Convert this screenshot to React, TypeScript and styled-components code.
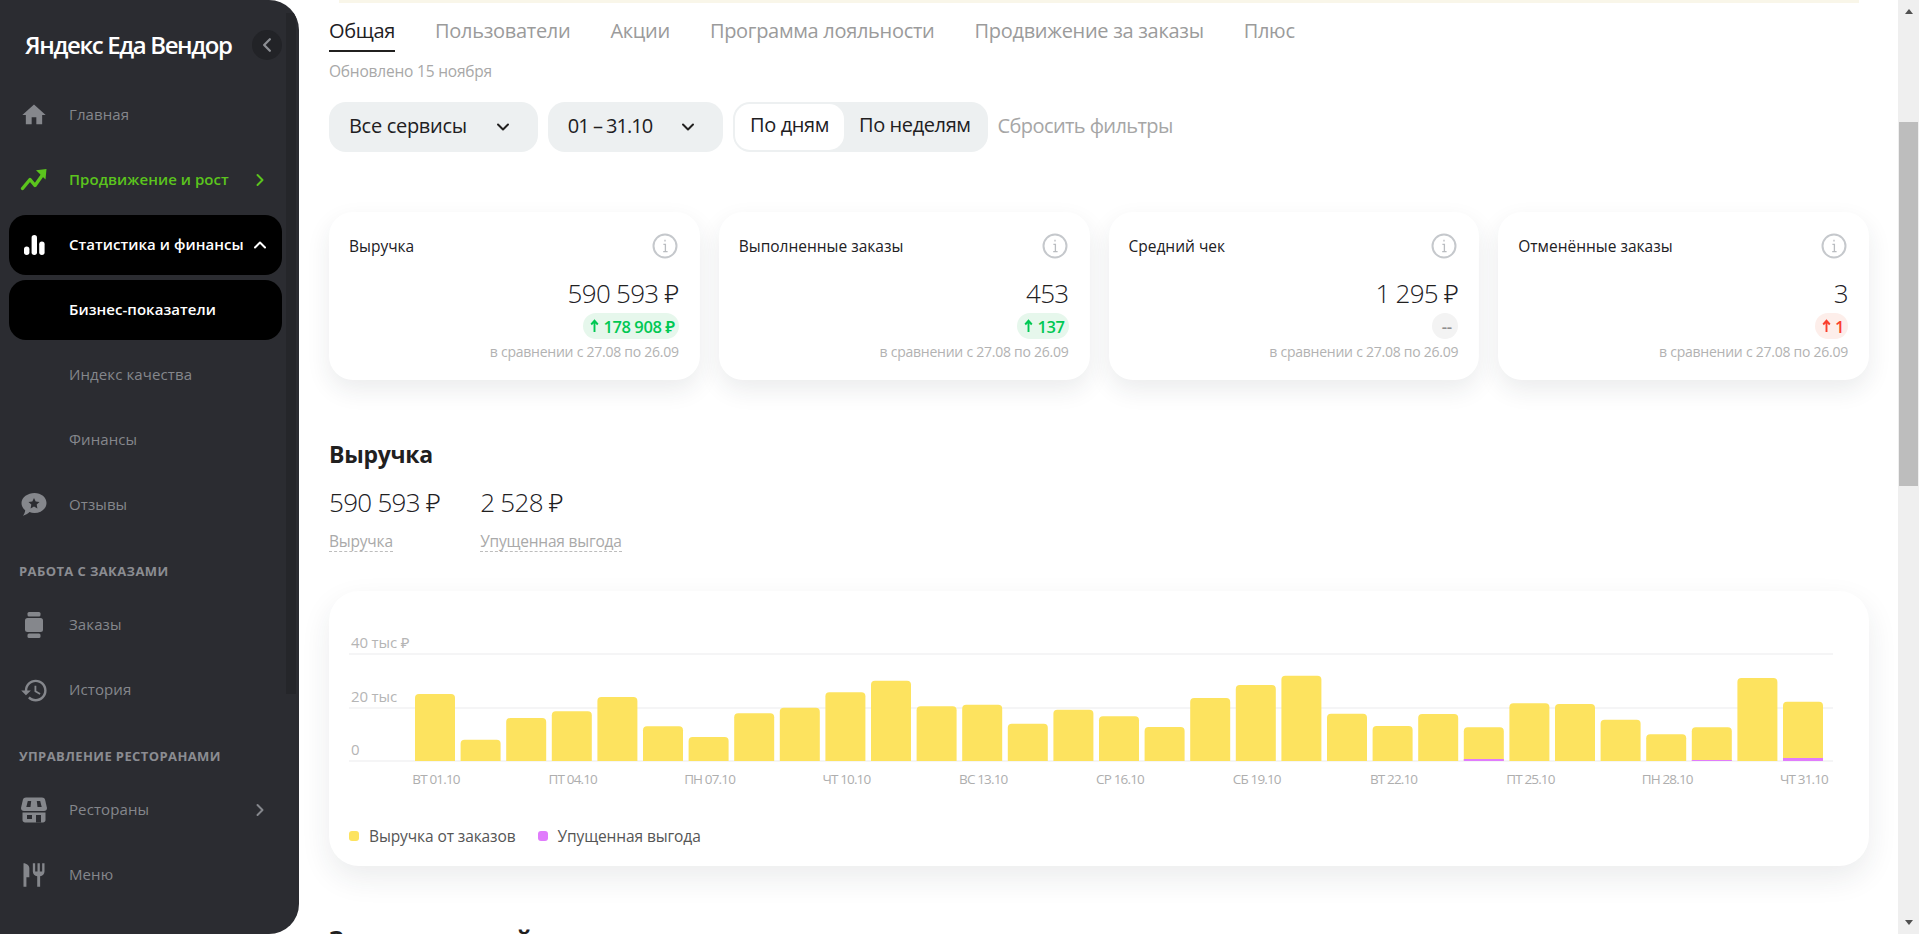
import React from "react";
import styled, { createGlobalStyle } from "styled-components";
import { MdHome, MdHistory, MdRestaurant } from "react-icons/md";

const Global = createGlobalStyle`
  html, body { margin: 0; padding: 0; height: 100%; background: #fff; overflow: hidden; }
  #root { height: 100%; }
  * { box-sizing: border-box; }
`;

const FONT = `"Open Sans", "Noto Sans", sans-serif`;

const Page = styled.div`
  display: flex;
  width: 1919px;
  height: 934px;
  overflow: hidden;
  background: #fff;
  font-family: ${FONT};
`;

const Sidebar = styled.aside`
  position: relative;
  flex: 0 0 299px;
  height: 934px;
  background: #2b2c31;
  border-radius: 0 30px 30px 0;
  padding: 0 17px 0 9px;
  overflow: hidden;
`;

const SideScroll = styled.div`
  position: absolute;
  right: 3px;
  top: 13px;
  width: 10px;
  height: 681px;
  background: #25262a;
`;

const LogoRow = styled.div`
  display: flex;
  align-items: center;
  justify-content: space-between;
  height: 85px;
  padding: 5px 0 0 16px;
`;

const Logo = styled.div`
  color: #fff;
  font-size: 24px;
  font-weight: 600;
  letter-spacing: -1.35px;
  white-space: nowrap;
  padding-bottom: 2px;
`;

const Collapse = styled.div`
  width: 30px;
  height: 30px;
  border-radius: 50%;
  background: #222327;
  color: #8d8f94;
  display: flex;
  align-items: center;
  justify-content: center;
`;

const Nav = styled.nav`
  display: flex;
  flex-direction: column;
  gap: 5px;
`;

const Item = styled.div<{ $tone?: "green" | "active" | "plain" }>`
  display: flex;
  align-items: center;
  height: 60px;
  border-radius: 17px;
  padding: 0 15px 0 0;
  font-size: 15px;
  font-weight: ${(p) => (p.$tone === "active" || p.$tone === "green" ? 600 : 500)};
  letter-spacing: ${(p) => (p.$tone === "active" || p.$tone === "green" ? "0.05px" : "0.1px")};
  white-space: nowrap;
  background: ${(p) => (p.$tone === "active" ? "#000" : "transparent")};
  color: ${(p) => (p.$tone === "active" ? "#fff" : p.$tone === "green" ? "#5bc41d" : "#85878c")};
`;

const IconSlot = styled.span`
  flex: 0 0 60px;
  display: flex;
  align-items: center;
  justify-content: center;
  padding-right: 10px;
  svg { display: block; }
`;

const ItemLabel = styled.span`
  flex: 1;
  padding-bottom: 2px;
`;

const NavHeader = styled.div`
  height: 50px;
  padding: 22px 0 0 10px;
  font-size: 13px;
  line-height: 18px;
  font-weight: 700;
  letter-spacing: 0.4px;
  color: #8b8d92;
  text-transform: uppercase;
  white-space: nowrap;
`;

const FlippedFork = styled(MdRestaurant)`
  transform: scaleX(-1);
`;

const Main = styled.main`
  flex: 1;
  min-width: 0;
  height: 934px;
  overflow: hidden;
  padding: 0 29px 0 30px;
`;

const TopStrip = styled.div`
  height: 3px;
  margin: 0 10px;
  background: #f9f6e9;
`;

const Tabs = styled.div`
  display: flex;
  gap: 40px;
  height: 49px;
`;

const Tab = styled.div<{ $active?: boolean }>`
  height: 49px;
  padding-top: 12px;
  font-size: 20px;
  line-height: 32px;
  letter-spacing: -0.3px;
  white-space: nowrap;
  color: ${(p) => (p.$active ? "#21201f" : "#9b9b9b")};
  border-bottom: 2px solid ${(p) => (p.$active ? "#21201f" : "transparent")};
`;

const Updated = styled.div`
  margin-top: 9px;
  font-size: 15.5px;
  line-height: 20px;
  letter-spacing: -0.2px;
  color: #a8a8a8;
`;

const Filters = styled.div`
  display: flex;
  align-items: center;
  gap: 10px;
  margin-top: 21px;
  height: 50px;
`;

const Select = styled.div<{ $tight?: boolean }>`
  display: flex;
  align-items: center;
  gap: 29px;
  height: 50px;
  padding: 0 28px 3px 20px;
  border-radius: 17px;
  background: #edf0f1;
  color: #21201f;
  font-size: 20px;
  letter-spacing: ${(p) => (p.$tight ? "-1px" : "-0.3px")};
  white-space: nowrap;
  svg { margin-top: 3px; }
`;

const Toggle = styled.div`
  display: flex;
  align-items: center;
  height: 50px;
  padding: 2px;
  border-radius: 17px;
  background: #edf0f1;
`;

const ToggleItem = styled.div<{ $active?: boolean }>`
  height: 46px;
  line-height: 42px;
  padding: 0 15px;
  border-radius: 15px;
  font-size: 20px;
  letter-spacing: -0.4px;
  white-space: nowrap;
  color: #21201f;
  background: ${(p) => (p.$active ? "#fff" : "transparent")};
`;

const Reset = styled.div`
  font-size: 20px;
  letter-spacing: -0.6px;
  color: #a6a6a6;
  white-space: nowrap;
  padding-bottom: 4px;
`;

const Cards = styled.div`
  display: grid;
  grid-template-columns: repeat(4, 1fr);
  gap: 19px;
  margin-top: 60px;
`;

const shadow = `0 10px 24px rgba(30, 40, 60, 0.09)`;

const Card = styled.div`
  height: 168px;
  padding: 22px 21px 0 20px;
  border-radius: 24px;
  background: #fff;
  box-shadow: ${shadow};
  display: flex;
  flex-direction: column;
  align-items: flex-end;
`;

const CardHead = styled.div`
  align-self: stretch;
  display: flex;
  align-items: center;
  justify-content: space-between;
  height: 24px;
  padding-right: 1px;
`;

const CardLabel = styled.div`
  font-size: 15.5px;
  letter-spacing: 0;
  color: #21201f;
`;

const CardValue = styled.div`
  margin-top: 20px;
  font-size: 26px;
  line-height: 30px;
  font-weight: 300;
  letter-spacing: -0.7px;
  color: #21201f;
  white-space: nowrap;
`;

const tones = {
  green: ["#e6f7ec", "#00c853"],
  gray: ["#f3f3f3", "#8f8f8f"],
  red: ["#fdeeea", "#fa3e2c"],
};

const Badge = styled.div<{ $tone: keyof typeof tones }>`
  display: flex;
  align-items: center;
  justify-content: center;
  gap: 4px;
  margin-top: 5px;
  height: 26px;
  min-width: 26px;
  padding: 0 4px 0 7px;
  border-radius: 13px;
  font-size: 16.5px;
  font-weight: 600;
  letter-spacing: -0.4px;
  white-space: nowrap;
  background: ${(p) => tones[p.$tone][0]};
  color: ${(p) => tones[p.$tone][1]};
`;

const Compare = styled.div`
  margin-top: 3px;
  font-size: 14px;
  line-height: 20px;
  letter-spacing: -0.25px;
  color: #b2b2b2;
  white-space: nowrap;
`;

const SectionTitle = styled.h2`
  margin: 59px 0 0;
  font-size: 23px;
  line-height: 30px;
  font-weight: 700;
  letter-spacing: -0.3px;
  color: #21201f;
`;

const Totals = styled.div`
  display: flex;
  gap: 40px;
  margin-top: 18px;
`;

const TotalCol = styled.div`
  display: flex;
  flex-direction: column;
  align-items: flex-start;
`;

const TotalValue = styled.div`
  font-size: 26px;
  line-height: 30px;
  font-weight: 300;
  letter-spacing: -0.7px;
  color: #21201f;
  white-space: nowrap;
`;

const TotalLabel = styled.div`
  margin-top: 14px;
  height: 21px;
  font-size: 15.5px;
  line-height: 20px;
  letter-spacing: -0.2px;
  color: #a9a9a9;
  border-bottom: 1px dashed #bdbdbd;
  white-space: nowrap;
`;

const ChartCard = styled.section`
  height: 275px;
  margin-top: 39px;
  padding: 44px 20px 0;
  border-radius: 30px;
  background: #fff;
  box-shadow: 0 12px 30px rgba(30, 40, 60, 0.09);
`;

const ChartSvg = styled.svg`
  display: block;
  width: 1484px;
  height: 160px;
  font-family: ${FONT};
`;

const AxisY = styled.text`
  font-size: 15px;
  letter-spacing: -0.15px;
  fill: #b5b5b5;
`;

const AxisX = styled.text`
  font-size: 13.5px;
  letter-spacing: -0.85px;
  fill: #aeaeae;
  text-anchor: middle;
`;

const Legend = styled.div`
  display: flex;
  align-items: center;
  gap: 22px;
  height: 20px;
  margin-top: 31px;
`;

const LegendItem = styled.div`
  display: flex;
  align-items: center;
  gap: 10px;
  font-size: 15.5px;
  letter-spacing: -0.1px;
  color: #555;
  white-space: nowrap;
`;

const Dot = styled.span<{ $color: string }>`
  width: 10px;
  height: 10px;
  border-radius: 3px;
  background: ${(p) => p.$color};
`;

const NextTitle = styled(SectionTitle)`
  margin-top: 58px;
`;

const Scrollbar = styled.div`
  flex: 0 0 21px;
  height: 934px;
  background: #efefef;
  display: flex;
  flex-direction: column;
  align-items: center;
`;

const ScrollUp = styled.div`
  margin-top: 9px;
  width: 0;
  height: 0;
  border-left: 4.5px solid transparent;
  border-right: 4.5px solid transparent;
  border-bottom: 5px solid #505050;
`;

const ScrollThumb = styled.div`
  width: 19px;
  height: 364px;
  margin-top: 108px;
  background: #bdbdbd;
`;

const ScrollDown = styled.div`
  margin-top: auto;
  margin-bottom: 9px;
  width: 0;
  height: 0;
  border-left: 4.5px solid transparent;
  border-right: 4.5px solid transparent;
  border-top: 5px solid #505050;
`;

const Chevron = ({ dir, size = 14, color = "currentColor", w = 2 }: { dir: "l" | "r" | "u" | "d"; size?: number; color?: string; w?: number }) => {
  const d = { l: "M9.5 2 4.5 7l5 5", r: "M4.5 2l5 5-5 5", u: "M2 9.5l5-5 5 5", d: "M2 4.5l5 5 5-5" }[dir];
  return (
    <svg width={size} height={size} viewBox="0 0 14 14" fill="none">
      <path d={d} stroke={color} strokeWidth={w} strokeLinecap="round" strokeLinejoin="round" />
    </svg>
  );
};

const TrendIcon = () => (
  <svg width="28" height="24" viewBox="0 0 28 24" fill="none">
    <path d="M2.500 20.500 10 11.500l5 6 8.500-12" stroke="#5bc41d" strokeWidth="3.400" strokeLinejoin="round" strokeLinecap="round" />
    <path d="M16 2.200 26.500 1l-1 10.500z" fill="#5bc41d" />
  </svg>
);

const BarsIcon = () => (
  <svg width="21" height="20" viewBox="0 0 21 20" fill="#fff">
    <rect x="0" y="11.500" width="5.400" height="8.500" rx="2.700" />
    <rect x="7.600" y="0" width="5.400" height="20" rx="2.700" />
    <rect x="15.200" y="6.500" width="5.400" height="13.500" rx="2.700" />
  </svg>
);

const ReviewIcon = () => (
  <svg width="28" height="28" viewBox="0 0 28 28" fill="#85878c">
    <path d="M14.500 2C21 2 26.500 6.300 26.500 12S21 22 14.500 22c-1.800 0-3.500-.3-5-.9-1.700 1.700-4 3-6.500 3.700 1.200-1.500 2-3.400 2.200-5.500C2.800 17.300 1.500 14.800 1.500 12 1.500 6.300 8 2 14.500 2z" />
    <path fill="#2b2c31" d="m14 7 1.700 3.500 3.800.5-2.800 2.600.7 3.800-3.400-1.800-3.400 1.800.7-3.800L8.500 11l3.800-.5z" />
  </svg>
);

const WatchIcon = () => (
  <svg width="24" height="28" viewBox="0 0 24 28" fill="#85878c">
    <rect x="5.500" y="1" width="13" height="4.500" rx="1.500" />
    <rect x="3" y="7" width="18" height="14" rx="2.500" />
    <rect x="5.500" y="22.500" width="13" height="4.500" rx="1.500" />
  </svg>
);

const StoreIcon = () => (
  <svg width="26" height="26" viewBox="0 0 26 26" fill="#85878c">
    <path d="M5 .5h16c1.500 0 2.700.9 3.100 2.300L26 11c0 2-1.200 3-3 3H3c-1.800 0-3-1-3-3l1.900-8.200C2.300 1.400 3.500.5 5 .5z" />
    <path fill="#2b2c31" d="M6.800 4h3.400l-.7 6H5.300zM15.800 4h3.400l1.500 6h-4.200z" />
    <path d="M1.500 15.500h23V23c0 1.600-1.200 2.500-2.500 2.500H4c-1.300 0-2.500-.9-2.500-2.500z" />
    <path fill="#2b2c31" d="M6 18h5v4H6zM15 18h5v7.500h-5z" />
  </svg>
);

const InfoIcon = () => (
  <svg width="26" height="26" viewBox="0 0 26 26" fill="none">
    <circle cx="13" cy="13" r="11.500" stroke="#c5c8cc" strokeWidth="2" />
    <path d="M13 6.800v1.800M11.400 11.400H13.400V18.400M11.200 18.600h4.400" stroke="#b9bcc0" strokeWidth="1.300" />
  </svg>
);

const UpArrow = () => (
  <svg width="9" height="14" viewBox="0 0 9 14" fill="none">
    <path d="M4.500 13V3M1.200 5.500 4.500 1.800l3.300 3.700" stroke="currentColor" strokeWidth="1.900" />
  </svg>
);

const tops = [162, 299, 234, 214, 171, 259, 291, 220, 203, 157, 122, 199, 194, 251, 209, 229, 261, 174, 135, 107, 221, 258, 222, 262, 190, 192, 239, 283, 262, 114, 185];
const purple: Record<number, number> = { 23: 2, 28: 1, 30: 3 };
const xLabels = ["ВТ 01.10", "ПТ 04.10", "ПН 07.10", "ЧТ 10.10", "ВС 13.10", "СР 16.10", "СБ 19.10", "ВТ 22.10", "ПТ 25.10", "ПН 28.10", "ЧТ 31.10"];
const BASE = 126;
const gridYs = [19, 73, 126];

const Chart = () => (
  <ChartSvg viewBox="0 0 1484 160">
    {gridYs.map((y) => (
      <rect key={y} x="0" y={y - 1} width="1484" height="2" fill="#f5f5f6" />
    ))}
    <AxisY x="2" y="13">40 тыс ₽</AxisY>
    <AxisY x="2" y="67">20 тыс</AxisY>
    <AxisY x="2" y="120">0</AxisY>
    {tops.map((t, i) => {
      const x = 66 + i * 45.6;
      const h = (363 - t) / 3;
      const top = BASE - h;
      const p = purple[i];
      return (
        <g key={i}>
          <path d={`M${x} ${BASE}V${top + 4}q0-4 4-4h32q4 0 4 4V${BASE}z`} fill="#fde35f" />
          {p ? <rect x={x} y={BASE - p} width="40" height={p} fill="#e07cfc" /> : null}
        </g>
      );
    })}
    {xLabels.map((l, i) => (
      <AxisX key={l} x={87 + i * 3 * 45.6} y="149">{l}</AxisX>
    ))}
  </ChartSvg>
);

const cards = [
  { label: "Выручка", value: "590 593 ₽", badge: "178 908 ₽", tone: "green" as const, up: true },
  { label: "Выполненные заказы", value: "453", badge: "137", tone: "green" as const, up: true },
  { label: "Средний чек", value: "1 295 ₽", badge: "--", tone: "gray" as const, up: false },
  { label: "Отменённые заказы", value: "3", badge: "1", tone: "red" as const, up: true },
];

const tabs = ["Общая", "Пользователи", "Акции", "Программа лояльности", "Продвижение за заказы", "Плюс"];

export default function App() {
  return (
    <Page>
      <Global />
      <Sidebar>
        <SideScroll />
        <LogoRow>
          <Logo>Яндекс Еда Вендор</Logo>
          <Collapse><Chevron dir="l" size={16} /></Collapse>
        </LogoRow>
        <Nav>
          <Item><IconSlot><MdHome size={28} color="#85878c" /></IconSlot><ItemLabel>Главная</ItemLabel></Item>
          <Item $tone="green"><IconSlot><TrendIcon /></IconSlot><ItemLabel>Продвижение и рост</ItemLabel><Chevron dir="r" /></Item>
          <Item $tone="active"><IconSlot><BarsIcon /></IconSlot><ItemLabel>Статистика и финансы</ItemLabel><Chevron dir="u" /></Item>
          <Item $tone="active"><IconSlot /><ItemLabel>Бизнес-показатели</ItemLabel></Item>
          <Item><IconSlot /><ItemLabel>Индекс качества</ItemLabel></Item>
          <Item><IconSlot /><ItemLabel>Финансы</ItemLabel></Item>
          <Item><IconSlot><ReviewIcon /></IconSlot><ItemLabel>Отзывы</ItemLabel></Item>
          <NavHeader>Работа с заказами</NavHeader>
          <Item><IconSlot><WatchIcon /></IconSlot><ItemLabel>Заказы</ItemLabel></Item>
          <Item><IconSlot><MdHistory size={29} color="#85878c" /></IconSlot><ItemLabel>История</ItemLabel></Item>
          <NavHeader>Управление ресторанами</NavHeader>
          <Item><IconSlot><StoreIcon /></IconSlot><ItemLabel>Рестораны</ItemLabel><Chevron dir="r" /></Item>
          <Item><IconSlot><FlippedFork size={28} color="#85878c" /></IconSlot><ItemLabel>Меню</ItemLabel></Item>
        </Nav>
      </Sidebar>
      <Main>
        <TopStrip />
        <Tabs>
          {tabs.map((t, i) => <Tab key={t} $active={i === 0}>{t}</Tab>)}
        </Tabs>
        <Updated>Обновлено 15 ноября</Updated>
        <Filters>
          <Select>Все сервисы <Chevron dir="d" size={14} color="#21201f" /></Select>
          <Select $tight>01 – 31.10 <Chevron dir="d" size={14} color="#21201f" /></Select>
          <Toggle>
            <ToggleItem $active>По дням</ToggleItem>
            <ToggleItem>По неделям</ToggleItem>
          </Toggle>
          <Reset>Сбросить фильтры</Reset>
        </Filters>
        <Cards>
          {cards.map((c) => (
            <Card key={c.label}>
              <CardHead><CardLabel>{c.label}</CardLabel><InfoIcon /></CardHead>
              <CardValue>{c.value}</CardValue>
              <Badge $tone={c.tone}>{c.up ? <UpArrow /> : null}{c.badge}</Badge>
              <Compare>в сравнении с 27.08 по 26.09</Compare>
            </Card>
          ))}
        </Cards>
        <SectionTitle>Выручка</SectionTitle>
        <Totals>
          <TotalCol><TotalValue>590 593 ₽</TotalValue><TotalLabel>Выручка</TotalLabel></TotalCol>
          <TotalCol><TotalValue>2 528 ₽</TotalValue><TotalLabel>Упущенная выгода</TotalLabel></TotalCol>
        </Totals>
        <ChartCard>
          <Chart />
          <Legend>
            <LegendItem><Dot $color="#fde35f" />Выручка от заказов</LegendItem>
            <LegendItem><Dot $color="#e07cfc" />Упущенная выгода</LegendItem>
          </Legend>
        </ChartCard>
        <NextTitle>Заказы из акций</NextTitle>
      </Main>
      <Scrollbar>
        <ScrollUp />
        <ScrollThumb />
        <ScrollDown />
      </Scrollbar>
    </Page>
  );
}
